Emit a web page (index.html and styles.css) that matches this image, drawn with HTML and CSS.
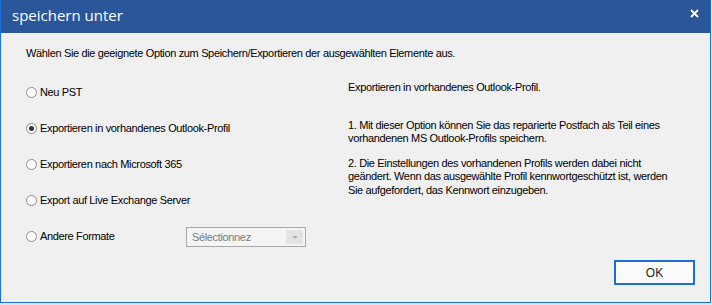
FILE: index.html
```html
<!DOCTYPE html>
<html lang="de">
<head>
    <meta charset="UTF-8">
    <title>speichern unter</title>
    <link rel="stylesheet" href="styles.css">
</head>
<body>
    <div class="dialog">
        <div class="titlebar">
            <span class="title">speichern unter</span>
            <button class="close" aria-label="Schließen">
                <svg width="9" height="9" viewBox="0 0 9 9">
                    <path d="M1 1 L8 8 M8 1 L1 8" stroke="#fff" stroke-width="1.8" fill="none"/>
                </svg>
            </button>
        </div>
        <div class="content">
            <p class="intro">Wählen Sie die geeignete Option zum Speichern/Exportieren der ausgewählten Elemente aus.</p>
            <div class="columns">
                <div class="options">
                    <label class="option"><span class="radio"></span>Neu PST</label>
                    <label class="option"><span class="radio checked"></span>Exportieren in vorhandenes Outlook-Profil</label>
                    <label class="option"><span class="radio"></span>Exportieren nach Microsoft 365</label>
                    <label class="option"><span class="radio"></span>Export auf Live Exchange Server</label>
                    <div class="option-row">
                        <label class="option"><span class="radio"></span>Andere Formate</label>
                        <div class="select">
                            <span class="select-text">Sélectionnez</span>
                            <span class="select-arrow"></span>
                        </div>
                    </div>
                </div>
                <div class="info">
                    <p class="info-head">Exportieren in vorhandenes Outlook-Profil.</p>
                    <p>1. Mit dieser Option können Sie das reparierte Postfach als Teil eines vorhandenen MS Outlook-Profils speichern.</p>
                    <p>2. Die Einstellungen des vorhandenen Profils werden dabei nicht geändert. Wenn das ausgewählte Profil kennwortgeschützt ist, werden Sie aufgefordert, das Kennwort einzugeben.</p>
                </div>
            </div>
            <div class="footer">
                <button class="ok">OK</button>
            </div>
        </div>
    </div>
</body>
</html>
```

FILE: styles.css
```css
body {
    margin: 0;
    width: 712px;
    height: 305px;
    overflow: hidden;
    background: #dfe6ef;
    font-family: "Liberation Sans", Arial, sans-serif;
    font-size: 11px;
    letter-spacing: -0.35px;
    color: #000;
}

.dialog {
    width: 709px;
    height: 302px;
    border: 1px solid #1b6fd6;
    border-top: none;
    background: #f0f0f0;
    display: flex;
    flex-direction: column;
}

.titlebar {
    height: 33px;
    background: #2b579a;
    display: flex;
    align-items: center;
    justify-content: space-between;
    padding: 0 11px 3px 11px;
    box-sizing: border-box;
}

.title {
    color: #fff;
    font-family: "Open Sans", "Liberation Sans", sans-serif;
    font-size: 15px;
    letter-spacing: 0;
}

.close {
    background: none;
    border: none;
    padding: 0;
    width: 9px;
    height: 9px;
    display: flex;
    margin-bottom: 3px;
}

.content {
    flex: 1;
    display: flex;
    flex-direction: column;
    padding: 0 15px 0 25px;
}

.intro {
    margin: 14px 0 0 0;
    line-height: 13px;
}

.columns {
    display: flex;
    margin-top: 24px;
}

.options {
    width: 322px;
    display: flex;
    flex-direction: column;
    gap: 20px;
}

.option {
    display: flex;
    align-items: center;
    height: 16px;
    gap: 3px;
}

.option-row {
    display: flex;
    align-items: flex-start;
}

.option-row .option {
    width: 160px;
}

.radio {
    width: 11px;
    height: 11px;
    border: 1px solid #888;
    border-radius: 50%;
    background: #fff;
    box-sizing: border-box;
    display: flex;
    align-items: center;
    justify-content: center;
}

.radio.checked::after {
    content: "";
    width: 5px;
    height: 5px;
    border-radius: 50%;
    background: #333;
}

.select {
    margin-top: -1px;
    width: 120px;
    height: 20px;
    border: 1px solid #a8a8a8;
    box-sizing: border-box;
    padding: 2px;
    display: flex;
    background: #f4f4f4;
}

.select-text {
    flex: 1;
    color: #7a7a7a;
    padding-left: 3px;
    line-height: 14px;
}

.select-arrow {
    width: 17px;
    background: #e4e4e4;
    display: flex;
    align-items: center;
    justify-content: center;
}

.select-arrow::after {
    content: "";
    border-left: 3px solid transparent;
    border-right: 3px solid transparent;
    border-top: 3px solid #b0b0b0;
}

.info {
    width: 336px;
    line-height: 13.5px;
    margin-top: -3px;
}

.info p {
    margin: 0 0 11px 0;
}

.info .info-head {
    margin-bottom: 24px;
}

.footer {
    margin-top: auto;
    margin-bottom: 17px;
    display: flex;
    justify-content: flex-end;
}

.ok {
    width: 81px;
    height: 25px;
    border: 2px solid #1a6fd4;
    background: #fbfbfb;
    font-family: "Liberation Sans", Arial, sans-serif;
    font-size: 12px;
    color: #222;
}
```
